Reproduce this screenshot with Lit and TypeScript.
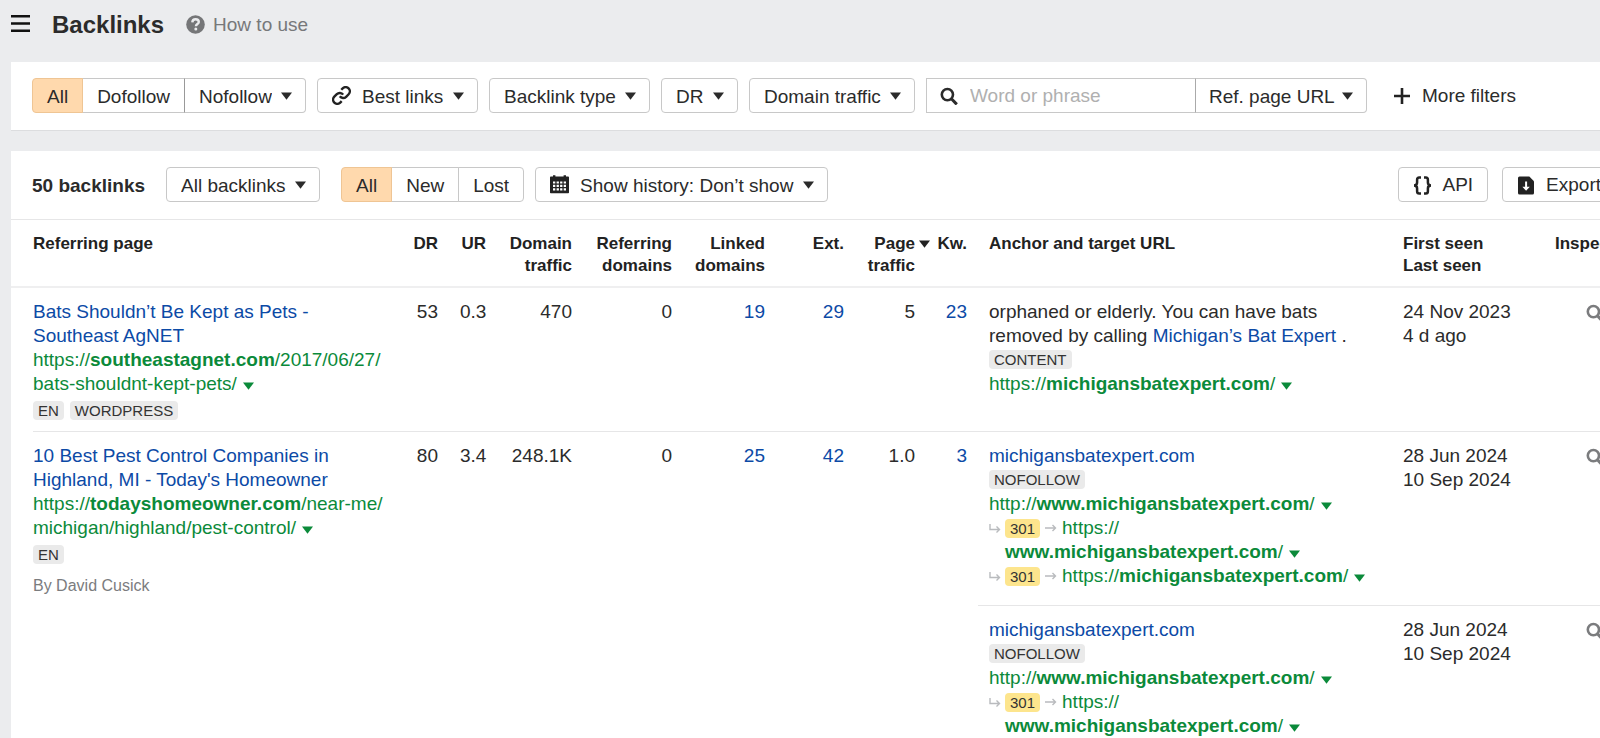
import { LitElement, html, css, svg, nothing, TemplateResult } from "lit";
import { customElement } from "lit/decorators.js";

const caret = (cls = "caret") => html`<svg class=${cls} viewBox="0 0 11 8" width="11" height="8" aria-hidden="true">
  <path d="M0 .5h11L5.5 7.8z" fill="currentColor" />
</svg>`;

const iconPaths: Record<string, TemplateResult> = {
  burger: svg`<path d="M0 1.200h19M0 8.500h19M0 15.800h19" stroke="#111" stroke-width="2.4" fill="none"/>`,
  help: svg`<circle cx="9.5" cy="9.5" r="9.3" fill="#757678"/>
    <path d="M6.3 7.4C6.4 5.300 7.700 4.300 9.600 4.300s3.200 1 3.200 2.700c0 2-2.900 2.100-2.900 4.300" fill="none" stroke="#ebecee" stroke-width="2.4"/>
    <circle cx="9.800" cy="14.100" r="1.5" fill="#ebecee"/>`,
  link: svg`<g transform="translate(-.6 -.6) scale(.84)" fill="none" stroke="#222" stroke-width="2.900">
    <path d="M10 13a5 5 0 0 0 7.540.540l3-3a5 5 0 0 0-7.070-7.070l-1.720 1.710"/>
    <path d="M14 11a5 5 0 0 0-7.540-.540l-3 3a5 5 0 0 0 7.070 7.070l1.710-1.710"/></g>`,
  calendar: svg`<path fill="#222" d="M0 2.400Q0 1.600.8 1.600H3V.2h2.400v1.400h8.200V.2H16v1.400h2.200q.8 0 .8.800v15q0 .8-.8.800H.8q-.8 0-.8-.8z"/>
    <path fill="#fff" d="M3 6.400h2.300v2.200H3zm3.600 0h2.300v2.200H6.600zm3.500 0h2.300v2.200h-2.300zm3.600 0H16v2.200h-2.300zM3 9.800h2.300V12H3zm3.600 0h2.300V12H6.600zm3.500 0h2.300V12h-2.300zm3.600 0H16V12h-2.300zM3 13.200h2.300v2.200H3zm3.600 0h2.300v2.200H6.600zm3.500 0h2.300v2.200h-2.300zm3.600 0H16v2.200h-2.300z"/>`,
  search: svg`<circle cx="7.4" cy="7.6" r="5.6" fill="none" stroke="currentColor" stroke-width="2.6"/>
    <path d="M11.4 11.8l5.4 5.6" stroke="currentColor" stroke-width="3"/>`,
  plus: svg`<path d="M9 1v16M1 9h16" stroke="#222" stroke-width="2.6" fill="none"/>`,
  braces: svg`<g fill="none" stroke="#222" stroke-width="2.500">
    <path d="M8 1.500H6.200Q4.100 1.500 4.100 3.800v2.800Q4.100 9.500 1 9.500Q4.100 9.500 4.100 12.400v2.800q0 2.300 2.100 2.300H8"/>
    <path d="M11 1.500h1.800q2.100 0 2.100 2.300v2.800q0 2.900 3.100 2.900q-3.100 0-3.100 2.900v2.800q0 2.300-2.100 2.300H11"/></g>`,
  file: svg`<path fill="#222" d="M1 2Q1 .5 2.500.5h9.800L17 5.200V17q0 1.500-1.500 1.500h-13Q1 18.500 1 17z"/>
    <path fill="#fff" d="M8.100 5.500h2v5.300h2.700l-3.700 4-3.700-4h2.700z"/>`,
  hook: svg`<path d="M1 1v5.500h9.500M7.500 3.500l3 3-3 3" fill="none" stroke="#b9bbbe" stroke-width="1.400"/>`,
  arrow: svg`<path d="M0 6h10.500M7.500 3l3 3-3 3" fill="none" stroke="#b9bbbe" stroke-width="1.400"/>`,
};

const icon = (name: string, w = 19, h = 19, cls = "icon") =>
  html`<svg class=${cls} width=${w} height=${h} viewBox="0 0 ${w} ${h}" aria-hidden="true">${iconPaths[name]}</svg>`;

const dropdown = (text: string, iconName = "", label = text) => html`
  <span class="drop ${iconName ? "with-icon" : ""}">
    ${iconName ? icon(iconName, 19, 19, "icon lead") : nothing}
    <select aria-label=${label}><option>${text}</option></select>
    ${caret("caret tail")}
  </span>`;

interface Url { scheme: string; host: string; path: string; rest?: string; }
interface Target {
  before?: string; anchor: string; after?: string; tag: string;
  url: Url; redirects: Url[]; first: string; last: string;
}
interface Page {
  title: string; url: Url; tags: string[]; author?: string;
  dr: string; ur: string; domainTraffic: string; refDomains: string;
  linked: string; ext: string; traffic: string; kw: string; targets: Target[];
}

const repeatTarget: Target = {
  anchor: "michigansbatexpert.com", tag: "NOFOLLOW",
  url: { scheme: "http://", host: "www.michigansbatexpert.com", path: "/" },
  redirects: [
    { scheme: "https://", host: "www.michigansbatexpert.com", path: "/" },
    { scheme: "https://", host: "michigansbatexpert.com", path: "/" },
  ],
  first: "28 Jun 2024", last: "10 Sep 2024",
};

const pages: Page[] = [
  {
    title: "Bats Shouldn’t Be Kept as Pets - Southeast AgNET",
    url: { scheme: "https://", host: "southeastagnet.com", path: "/2017/06/27/", rest: "bats-shouldnt-kept-pets/" },
    tags: ["EN", "WORDPRESS"],
    dr: "53", ur: "0.3", domainTraffic: "470", refDomains: "0", linked: "19", ext: "29", traffic: "5", kw: "23",
    targets: [{
      before: "orphaned or elderly. You can have bats removed by calling ",
      anchor: "Michigan’s Bat Expert", after: " .", tag: "CONTENT",
      url: { scheme: "https://", host: "michigansbatexpert.com", path: "/" },
      redirects: [], first: "24 Nov 2023", last: "4 d ago",
    }],
  },
  {
    title: "10 Best Pest Control Companies in Highland, MI - Today's Homeowner",
    url: { scheme: "https://", host: "todayshomeowner.com", path: "/near-me/", rest: "michigan/highland/pest-control/" },
    tags: ["EN"], author: "By David Cusick",
    dr: "80", ur: "3.4", domainTraffic: "248.1K", refDomains: "0", linked: "25", ext: "42", traffic: "1.0", kw: "3",
    targets: [repeatTarget, repeatTarget],
  },
];

const fullUrl = (u: Url) => u.rest
  ? html`<a class="url" href="#">${u.scheme}<b>${u.host}</b>${u.path}<wbr><span class="keep">${u.rest} ${caret("caret inline")}</span></a>`
  : html`<a class="url" href="#">${u.scheme}<wbr><span class="keep"><b>${u.host}</b>${u.path} ${caret("caret inline")}</span></a>`;

@customElement("app-root")
export class AppRoot extends LitElement {
  static styles = css`
    :host {
      display: block; height: 100vh; overflow: hidden; background: #ebecee; color: #2b2b2b;
      font: 19px/24px "Liberation Sans", Arial, sans-serif;
    }
    * { box-sizing: border-box; }
    svg { display: block; flex: none; }
    a { color: #0c4aa6; text-decoration: none; }
    button, select, input { font: inherit; color: inherit; margin: 0; }
    .top { display: flex; align-items: center; height: 62px; padding: 0 11px 13px; }
    .burger { border: 0; background: none; padding: 0; }
    h1 { font-size: 24px; line-height: 28px; margin: 0 22px; }
    .help { display: flex; align-items: center; gap: 8px; color: #77787a; }
    .panel { margin-left: 11px; min-width: 1629px; background: #fff; }
    .filters { border-bottom: 1px solid #dcdddf; margin-bottom: 20px; }
    .bar { display: flex; align-items: center; gap: 11px; padding: 16px 22px 17px 21px; }
    .results .bar { border-bottom: 1px solid #e6e6e7; }
    .btn, .drop, .seg button {
      height: 35px; border: 1px solid #c8c8c8; border-radius: 4px; background: #fff; white-space: nowrap;
    }
    .btn { display: flex; align-items: center; gap: 11px; padding: 1px 14px 0; }
    .btn.api { gap: 10px; margin-left: auto; }
    .btn.export { margin-left: 3px; padding-right: 16px; }
    .btn.plain { border-color: transparent; }
    .drop { display: grid; align-items: center; }
    .drop > * { grid-area: 1 / 1; }
    .drop select {
      appearance: none; border: 0; background: none; height: 33px; padding: 2px 33px 0 14px; border-radius: 3px;
    }
    .with-icon select { padding-left: 44px; }
    .lead { margin-left: 14px; pointer-events: none; }
    .tail { justify-self: end; margin-right: 13px; pointer-events: none; }
    .seg { display: flex; }
    .seg > * + * { margin-left: -1px; }
    .seg button { padding: 2px 14px 0; }
    .seg > :not(:last-child) { border-top-right-radius: 0; border-bottom-right-radius: 0; }
    .seg > :not(:first-child) { border-top-left-radius: 0; border-bottom-left-radius: 0; }
    .seg .on { background: #ffd9ad; border-color: #efc594; position: relative; }
    .seg.dark > :last-child { border-left-color: #999; }
    .search { display: flex; }
    .field { display: flex; align-items: center; gap: 12px; width: 270px; height: 35px; padding: 1px 14px 0 13px; border: 1px solid #c8c8c8; }
    .field input { border: 0; background: none; outline: 0; padding: 0; width: 100%; min-width: 0; }
    .field input::placeholder { color: #b0b0b0; opacity: 1; }
    .search .drop { margin-left: -1px; border-radius: 0 4px 4px 0; border-left-color: #aaa; }
    .search select { padding-left: 13px; padding-right: 31px; }
    .count { font-size: 19px; margin: 0 10px 0 0; padding-top: 2px; }
    .bar .spaced { margin-left: 10px; }

    table { width: 100%; table-layout: fixed; border-collapse: separate; border-spacing: 0; }
    .c-page { width: 390px; } .c-s { width: 48px; } .c-dt { width: 86px; } .c-rd { width: 100px; }
    .c-ld { width: 93px; } .c-ext { width: 79px; } .c-pt { width: 71px; } .c-kw { width: 52px; }
    .c-date { width: 152px; } .c-ins { width: 96px; }
    th, td { text-align: left; vertical-align: top; font-weight: 400; }
    th {
      font-size: 17px; line-height: 22px; font-weight: 700; padding: 13px 11px 9px;
      border-bottom: 2px solid #efeff0; white-space: nowrap; color: #222;
    }
    th.wide { padding-right: 0; }
    th.num, td.num { text-align: right; }
    .sort { display: inline-block; margin: 0 -15px 0 4px; vertical-align: 1px; }
    td { padding: 12px 11px 17px; border-top: 1px solid #e6e6e7; }
    .first td { border-top: 0; }
    th.page { padding-left: 22px; }
    td.page, .first td.page {
      padding: 13px 0 8px 22px; border-top: 0;
      background: linear-gradient(#e6e6e7, #e6e6e7) 22px 0 / 100% 1px no-repeat;
    }
    .first td.page { padding-top: 12px; background: none; }
    .title { display: block; margin-right: 30px; }
    .url { display: block; color: #0b8a3a; }
    .keep { white-space: nowrap; }
    .inline { display: inline-block; margin-left: 1px; vertical-align: 0; }
    .tags { display: flex; gap: 6px; align-items: center; height: 24px; padding-bottom: 2px; }
    .page .tags { margin-top: 3px; }
    .tag { font-size: 15px; line-height: 19px; padding: 0 5px; border-radius: 4px; background: #eaeaea; color: #333; }
    .author { font-size: 16px; color: #7b7c7e; margin-top: 7px; }
    .hop { padding-left: 16px; }
    .hop .url { display: inline; }
    .hop .hook { display: inline-block; margin-left: -16px; margin-right: 4px; vertical-align: -1px; }
    .hop .code { display: inline-block; background: #fde58d; }
    .hop .arrow { display: inline-block; margin: 0 5px; vertical-align: 0; }
    .look { display: block; margin: 4px 0 0 31px; border: 0; background: none; padding: 0; color: #7b7c7e; }
  `;

  private target(t: Target) {
    return html`
      <td>
        <div>${t.before}<a href="#">${t.anchor}</a>${t.after}</div>
        <div class="tags"><span class="tag">${t.tag}</span></div>
        ${fullUrl(t.url)}
        ${t.redirects.map((r) => html`<div class="hop">${icon("hook", 12, 12, "hook")}<span class="tag code">301</span>${icon("arrow", 12, 12, "arrow")}${fullUrl(r)}</div>`)}
      </td>
      <td>${t.first}<br>${t.last}</td>
      <td><button class="look" aria-label="Inspect">${icon("search", 18, 18)}</button></td>`;
  }

  private rows(p: Page, index: number) {
    const span = p.targets.length;
    const num = (v: string, link = false) =>
      html`<td class="num" rowspan=${span}>${link ? html`<a href="#">${v}</a>` : v}</td>`;
    return p.targets.map((t, i) => html`<tr class=${index === 0 ? "first" : ""}>
      ${i > 0 ? nothing : html`
        <td class="page" rowspan=${span}>
          <a class="title" href="#">${p.title}</a>
          ${fullUrl(p.url)}
          <div class="tags">${p.tags.map((g) => html`<span class="tag">${g}</span>`)}</div>
          ${p.author ? html`<div class="author">${p.author}</div>` : nothing}
        </td>
        ${num(p.dr)}${num(p.ur)}${num(p.domainTraffic)}${num(p.refDomains)}
        ${num(p.linked, true)}${num(p.ext, true)}${num(p.traffic)}${num(p.kw, true)}`}
      ${this.target(t)}
    </tr>`);
  }

  render() {
    return html`
      <header class="top">
        <button class="burger" aria-label="Menu">${icon("burger")}</button>
        <h1>Backlinks</h1>
        <a class="help" href="#">${icon("help")}How to use</a>
      </header>

      <section class="panel filters">
        <div class="bar">
          <div class="seg dark">
            <button class="on">All</button>
            <button>Dofollow</button>
            ${dropdown("Nofollow")}
          </div>
          ${dropdown("Best links", "link")}
          ${dropdown("Backlink type")}
          ${dropdown("DR")}
          ${dropdown("Domain traffic")}
          <div class="search">
            <label class="field">${icon("search", 18, 18)}<input type="text" placeholder="Word or phrase" aria-label="Word or phrase"></label>
            ${dropdown("Ref. page URL")}
          </div>
          <button class="btn plain">${icon("plus", 18, 18)}More filters</button>
        </div>
      </section>

      <main class="panel results">
        <div class="bar">
          <h2 class="count">50 backlinks</h2>
          ${dropdown("All backlinks")}
          <div class="seg spaced">
            <button class="on">All</button>
            <button>New</button>
            <button>Lost</button>
          </div>
          ${dropdown("Show history: Don’t show", "calendar")}
          <button class="btn api">${icon("braces")}API</button>
          <button class="btn export">${icon("file", 18, 19)}Export</button>
        </div>
        <table>
          <colgroup>
            <col class="c-page"><col class="c-s"><col class="c-s"><col class="c-dt"><col class="c-rd"><col class="c-ld">
            <col class="c-ext"><col class="c-pt"><col class="c-kw"><col><col class="c-date"><col class="c-ins">
          </colgroup>
          <thead>
            <tr>
              <th class="page">Referring page</th>
              <th class="num">DR</th>
              <th class="num">UR</th>
              <th class="num">Domain<br>traffic</th>
              <th class="num">Referring<br>domains</th>
              <th class="num">Linked<br>domains</th>
              <th class="num">Ext.</th>
              <th class="num">Page${caret("sort")}<br>traffic</th>
              <th class="num">Kw.</th>
              <th>Anchor and target URL</th>
              <th>First seen<br>Last seen</th>
              <th class="wide">Inspect</th>
            </tr>
          </thead>
          <tbody>${pages.map((p, i) => this.rows(p, i))}</tbody>
        </table>
      </main>`;
  }
}
